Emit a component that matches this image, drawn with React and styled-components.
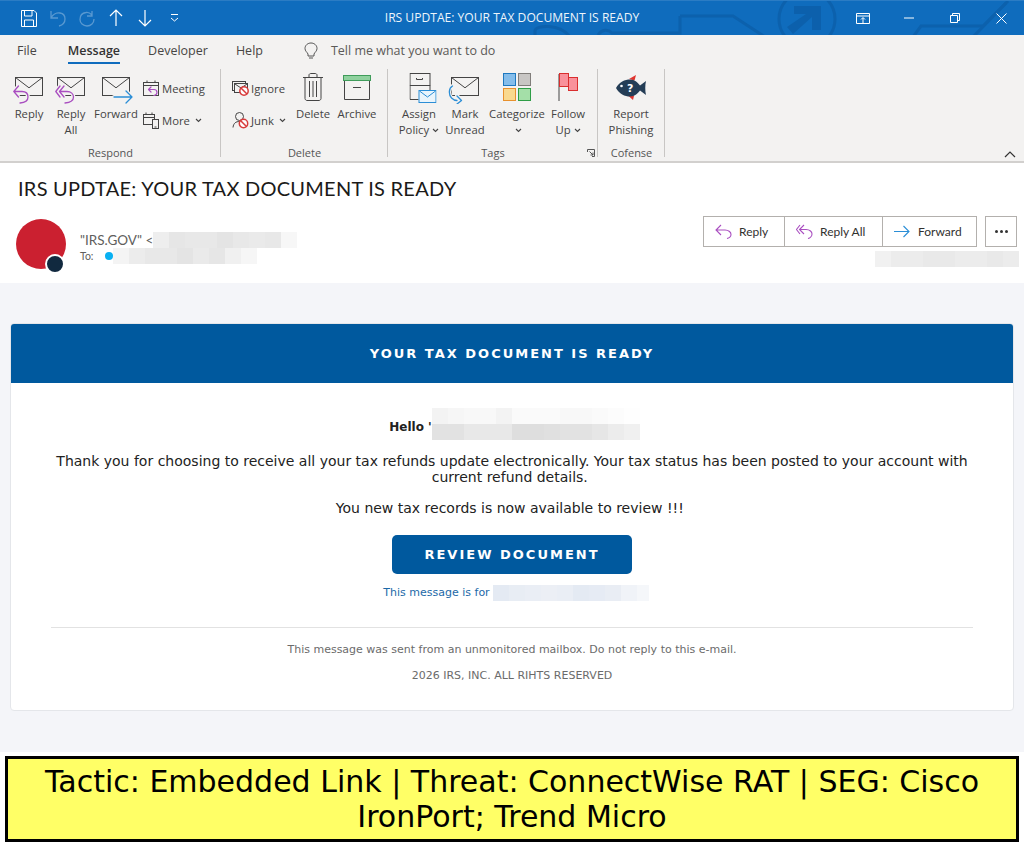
import React from "react";
import styled, { createGlobalStyle } from "styled-components";

const Global = createGlobalStyle`
  html, body { margin: 0; padding: 0; background: #fff; }
  body { width: 1024px; height: 847px; overflow: hidden; font-family: "Open Sans", "Noto Sans", sans-serif; }
  * { box-sizing: border-box; }
`;

const Page = styled.div`width: 1024px; height: 847px; display: flex; flex-direction: column; overflow: hidden;`;

/* Title bar */
const TitleBar = styled.div`
  position: relative; height: 35px; flex: none; background: #0f6cbd; border-top: 1px solid #2b7cc4;
  display: flex; align-items: center; padding-left: 18px; color: #fff; overflow: hidden;
`;
const TitleArt = styled.svg`position: absolute; left: 380px; top: 0; width: 644px; height: 35px; pointer-events: none;`;
const Quick = styled.div`display: flex; align-items: center; gap: 7px; position: relative;`;
const QuickBtn = styled.span`width: 22px; height: 24px; display: flex; align-items: center; justify-content: center; opacity: ${p => p.$dim ? 0.3 : 1};`;
const TitleText = styled.div`
  position: absolute; left: 0; right: 0; top: 0; height: 34px; text-align: center; line-height: 34px;
  font-size: 12.1px; color: #eef5fb;
`;
const WinBtns = styled.div`position: absolute; right: 0; top: 0; height: 34px; display: flex; align-items: center;`;
const WinBtn = styled.span`width: 46px; height: 34px; display: flex; align-items: center; justify-content: center;`;

/* Tabs */
const TabBar = styled.div`height: 31px; flex: none; background: #f3f2f1; display: flex; align-items: center; color: #444; font-size: 12.5px;`;
const Tab = styled.div`
  position: relative; margin-left: ${p => p.$ml}px; height: 31px; line-height: 31px; color: ${p => p.$active ? "#333" : "#484644"};
  font-weight: ${p => p.$active ? 600 : 400};
  ${p => p.$active && `&::after { content: ""; position: absolute; left: 0; right: 0; bottom: 2px; height: 2px; background: #0f6cbd; }`}
`;
const TellMe = styled.div`display: flex; align-items: center; gap: 13px; margin-left: 41px; color: #5c5a58;`;

/* Ribbon */
const Ribbon = styled.div`
  position: relative; height: 97px; flex: none; background: #f3f2f1; border-bottom: 2px solid #d2d0ce;
  display: flex; align-items: stretch;
`;
const Group = styled.div`
  width: ${p => p.$w}px; flex: none; position: relative; padding-left: ${p => p.$pl}px; padding-top: 10px;
  &::after { content: ""; position: absolute; right: 0; top: 3px; height: 88px; width: 1px; background: #c8c6c4; }
`;
const GroupBody = styled.div`display: flex; height: 69px;`;
const GroupLabel = styled.div`
  position: absolute; left: 0; right: 0; top: 79px; text-align: center; font-size: 11px; line-height: 16px; color: #555;
`;
const BigBtn = styled.div`
  width: ${p => p.$w}px; flex: none; display: flex; flex-direction: column; align-items: center;
  font-size: 11.3px; line-height: 15.5px; color: #444; text-align: center; white-space: nowrap;
`;
const BigIcon = styled.div`
  height: 30px; width: 100%; display: flex; justify-content: center; align-items: flex-start;
  & > svg { transform: translate(${p => p.$dx || 0}px, ${p => p.$dy || 0}px); flex: none; }
`;
const BtnLabel = styled.div`display: block;`;
const SmallCol = styled.div`
  width: ${p => p.$w}px; flex: none; margin-left: ${p => p.$ml || 0}px; display: flex; flex-direction: column; gap: 8px; padding-top: 0;
`;
const SmallBtn = styled.div`display: flex; align-items: center; gap: 2px; height: 24px; font-size: 11.3px; color: #444; white-space: nowrap;`;
const Chev = styled.svg`width: 7px; height: 5px; margin-left: 3px; vertical-align: 1px;`;
const Collapse = styled.svg`position: absolute; right: 8px; bottom: 3px; width: 12px; height: 7px;`;
const Launcher = styled.svg`position: absolute; right: 3px; bottom: 4px; width: 8px; height: 8px;`;

/* Mail header */
const MailHead = styled.div`height: 120px; flex: none; background: #fff; position: relative;`;
const Subject = styled.div`padding: 12px 0 0 18px; font-size: 20px; line-height: 27px; color: #1b1a19; font-family: "Lato", sans-serif; font-weight: 400; letter-spacing: .0125em;`;
const SenderRow = styled.div`display: flex; margin: 17px 0 0 16px; align-items: flex-start; justify-content: space-between;`;
const Who = styled.div`display: flex; gap: 14px;`;
const Avatar = styled.div`
  width: 50px; height: 50px; border-radius: 50%; background: #cb2030; position: relative;
`;
const Dot = styled.span`
  position: absolute; right: 1px; bottom: -5px; width: 20px; height: 20px; border-radius: 50%; background: #11293f; border: 2px solid #fff;
`;
const WhoText = styled.div`display: flex; flex-direction: column; padding-top: 13px;`;
const FromLine = styled.div`display: flex; align-items: center; height: 16px; font-size: 13.5px; color: #605e5c; font-family: "Lato", sans-serif;`;
const ToLine = styled.div`display: flex; align-items: center; height: 16px; font-size: 10.5px; color: #605e5c; font-family: "Lato", sans-serif;`;
const Presence = styled.span`width: 8px; height: 8px; border-radius: 50%; background: #09b0f2; margin: 0 0 0 11px;`;
const Mosaic = styled.span`display: inline-flex; flex: none; overflow: hidden; height: 16px; ${p => p.$w && `width: ${p.$w}px;`}`;
const Cell = styled.span`width: 16px; height: 100%; flex: none;`;
const Actions = styled.div`display: flex; flex-direction: column; align-items: flex-end; margin-right: 7px; margin-top: -3px;`;
const ActionRow = styled.div`display: flex; gap: 8px;`;
const BtnGroup = styled.div`display: flex; border: 1px solid #b3b0ad; height: 31px; background: #fff;`;
const ActionBtn = styled.div`
  width: ${p => p.$w}px; display: flex; align-items: center; gap: 7px; padding-left: 11px; font-size: 12px; color: #323130; font-family: "Lato", sans-serif;
  & + & { border-left: 1px solid #b3b0ad; }
`;
const More = styled.div`width: 32px; height: 31px; border: 1px solid #b3b0ad; display: flex; align-items: center; justify-content: center; gap: 2px;`;
const Pip = styled.span`width: 3px; height: 3px; border-radius: 50%; background: #333;`;
const DateBlur = styled.div`margin-top: 3px; margin-right: -2px;`;

/* Body */
const Body = styled.div`height: 469px; flex: none; background: #f4f5f9; padding: 40px 10px 0; font-family: "DejaVu Sans", sans-serif;`;
const Card = styled.div`height: 388px; background: #fff; border: 1px solid #e4e6ea; border-radius: 4px; overflow: hidden;`;
const CardHead = styled.div`
  height: 59px; background: #00599e; color: #fff; font-weight: 700; font-size: 13px; letter-spacing: 2px;
  display: flex; align-items: center; justify-content: center;
`;
const CardBody = styled.div`padding: 25px 40px 0; text-align: center; color: #222; font-size: 14px; line-height: 16px;`;
const Hello = styled.div`display: flex; justify-content: center; position: relative; height: 32px; padding-left: 5px; font-weight: 700; font-size: 12px; color: #222;`;
const HelloText = styled.span`padding-top: 11px; white-space: nowrap; overflow: hidden;`;
const HelloBlur = styled.span`display: flex; flex-direction: column;`;
const Para = styled.p`margin: ${p => p.$mt}px 0 0; font-size: 14px; line-height: 16px; color: #222;`;
const Cta = styled.div`
  width: 240px; height: 39px; margin: 19px auto 0; background: #00599e; border-radius: 5px; color: #fff;
  font-weight: 700; font-size: 13px; letter-spacing: 2px; display: flex; align-items: center; justify-content: center;
`;
const ForLine = styled.div`display: flex; justify-content: center; align-items: center; gap: 3px; margin-top: 11px; height: 16px; padding-left: 8px; font-size: 11px; color: #1c69a8;`;
const Rule = styled.div`height: 1px; background: #e2e2e2; margin-top: 26px;`;
const Foot = styled.div`font-size: 11px; line-height: 14px; color: #6b6b6b; margin-top: ${p => p.$mt}px;`;

/* Banner */
const Banner = styled.div`
  margin: 4px 5px 0; height: 86px; flex: none; border: 3px solid #000; background: #ffff66; color: #000;
  font-family: "DejaVu Sans", sans-serif; font-size: 30px; line-height: 35px; text-align: center; padding: 5px 20px 0;
`;

/* Icons */
const ST = { fill: "none", strokeLinecap: "round", strokeLinejoin: "round" };
const BG = "#f3f2f1";
const Chevron = () => <Chev viewBox="0 0 7 5"><path d="M1 1l2.5 2.5L6 1" stroke="#444" strokeWidth="1.1" fill="none" /></Chev>;

const Envelope = ({ x = 0, y = 0, w = 27, h = 18 }) => (
  <g transform={`translate(${x} ${y})`}>
    <rect x=".5" y=".5" width={w} height={h} fill="none" stroke="#444" />
    <path d={`M.5 .5L${w / 2 + .5} ${h * .6}L${w + .5} .5`} fill="none" stroke="#444" />
  </g>
);
const Halo = ({ d, color }) => (
  <>
    <path d={d} {...ST} stroke={BG} strokeWidth="4" />
    <path d={d} {...ST} stroke={color} strokeWidth="1.3" />
  </>
);
const ReplyIcon = () => (
  <svg width="32" height="28" viewBox="0 0 32 28">
    <Envelope x="2" y="1" />
    <Halo color="#a94ec0" d="M5.500 10L.8 15.500L5.500 21M.8 15.500H9C13 15.500 15 18 15 21C15 24 13 26.500 7 27" />
  </svg>
);
const ReplyAllIcon = () => (
  <svg width="32" height="28" viewBox="0 0 32 28">
    <Envelope x="2" y="1" />
    <Halo color="#a94ec0" d="M5 10L.8 15.500L5 21M9 10L4.500 15.500L9 21M4.500 15.500H12C16 15.500 18.500 18 18.500 21C18.500 24 16 26.500 10 27" />
  </svg>
);
const ForwardIcon = () => (
  <svg width="34" height="28" viewBox="0 0 34 28">
    <Envelope x="3" y="1" />
    <Halo color="#2b8ed6" d="M15 21H33M27 15L33 21L27 27" />
  </svg>
);
const MeetingIcon = () => (
  <svg width="17" height="17" viewBox="0 0 17 17">
    <rect x=".5" y="2.500" width="15" height="13" fill="none" stroke="#444" />
    <path d="M.5 5.500H15.500M4 .5V3M12 .5V3" stroke="#444" fill="none" />
    <path d="M8 7L5.500 9.500L8 12M5.500 9.500H11C13 9.500 14 11 14 12.500C14 14 13 15 11 15.500" {...ST} stroke="#a94ec0" strokeWidth="1.2" fill={BG} />
  </svg>
);
const MoreIcon = () => (
  <svg width="17" height="17" viewBox="0 0 17 17">
    <rect x=".5" y="2.500" width="11" height="10" fill="none" stroke="#444" />
    <path d="M.5 5.500H11.500M3 .5V3M9 .5V3" stroke="#444" fill="none" />
    <rect x="9.500" y="7.500" width="6" height="9" fill={BG} stroke="#444" />
    <path d="M11.500 15H13.500" stroke="#444" />
  </svg>
);
const NoSign = ({ x, y }) => (
  <g transform={`translate(${x} ${y})`}>
    <circle cx="5" cy="5" r="4.200" fill="#fff" stroke="#d83b3b" strokeWidth="1.500" />
    <path d="M2 2L8 8" stroke="#d83b3b" strokeWidth="1.500" />
  </g>
);
const IgnoreIcon = () => (
  <svg width="17" height="17" viewBox="0 0 17 17">
    <rect x=".5" y="1.500" width="13" height="9" fill="none" stroke="#444" />
    <rect x="2.500" y="3.500" width="13" height="9" fill={BG} stroke="#444" />
    <path d="M3 4L9 8L15 4" fill="none" stroke="#444" />
    <NoSign x="7" y="6" />
  </svg>
);
const JunkIcon = () => (
  <svg width="17" height="18" viewBox="0 0 17 18">
    <circle cx="7.500" cy="5.500" r="4" fill="none" stroke="#444" />
    <path d="M1 16.500C1.500 12 4 10.500 7.500 10.500" fill="none" stroke="#444" />
    <NoSign x="6.500" y="7.500" />
  </svg>
);
const TrashIcon = () => (
  <svg width="22" height="28" viewBox="0 0 22 28">
    <path d="M1 4.500H21M7 4V2C7 1 8 .5 9 .5H13C14 .5 15 1 15 2V4" fill="none" stroke="#444" />
    <path d="M3 5V25.500C3 26.500 4 27.500 5 27.500H17C18 27.500 19 26.500 19 25.500V5" fill="none" stroke="#444" />
    <path d="M7.500 8V24M11 8V24M14.500 8V24" stroke="#444" />
  </svg>
);
const ArchiveIcon = () => (
  <svg width="28" height="25" viewBox="0 0 28 25">
    <rect x=".5" y=".5" width="27" height="5" fill="#8fd19e" stroke="#3f9c5a" />
    <path d="M1.500 6V24.500H26.500V6" fill="none" stroke="#444" />
    <path d="M10 12.500H18" stroke="#444" />
  </svg>
);
const AssignIcon = () => (
  <svg width="27" height="31" viewBox="0 0 27 31">
    <rect x=".5" y=".5" width="20" height="12" fill="none" stroke="#444" />
    <path d="M20.500 12.500V17M9 26.500H.5V12.500" fill="none" stroke="#444" />
    <path d="M7 5V6.500H13V5" fill="none" stroke="#444" />
    <rect x="9.500" y="17.500" width="17" height="12" fill="#eaf5fc" stroke="#2b8ed6" />
    <path d="M10 18L18 24L26 18" fill="none" stroke="#2b8ed6" />
  </svg>
);
const UnreadIcon = () => (
  <svg width="34" height="28" viewBox="0 0 34 28">
    <Envelope x="3" y="1" />
    <Halo color="#2b8ed6" d="M4.500 10C.5 12 .5 19 3.500 22C5 23.500 7 24.500 9 24.500M9 20L13.500 24.500L9 28" />
  </svg>
);
const CatIcon = () => (
  <svg width="28" height="29" viewBox="0 0 28 29">
    <rect x=".5" y=".5" width="12" height="12" fill="#85bdea" stroke="#1e79c0" />
    <rect x="15.500" y=".5" width="12" height="12" fill="#c8c6c4" stroke="#807d7a" />
    <rect x=".5" y="15.500" width="12" height="12" fill="#f9d98f" stroke="#e8912d" />
    <rect x="15.500" y="15.500" width="12" height="12" fill="#a4dfa8" stroke="#2e9d47" />
  </svg>
);
const FlagIcon = () => (
  <svg width="20" height="29" viewBox="0 0 20 29">
    <path d="M1 1V28" stroke="#444" strokeWidth="1" />
    <rect x="1.500" y=".5" width="9" height="13" fill="#f9919b" stroke="#d92e2e" />
    <rect x="10.500" y="4.500" width="9" height="13" fill="#f9919b" stroke="#d92e2e" />
  </svg>
);
const FishIcon = () => (
  <svg width="32" height="28" viewBox="0 0 32 28">
    <path d="M14 5L21 1L19.500 6.500Z" fill="#e0352f" />
    <path d="M13 21.500L18 26L19 22Z" fill="#e0352f" />
    <path d="M1 14C4 8 10 5.500 15 5.500C20 5.500 23 9 25 11.500L31 7C30 11 30 17 31 21L25 16.500C23 19 20 22.500 15 22.500C10 22.500 4 20 1 14Z" fill="#243d56" />
    <circle cx="6.500" cy="12" r="1.300" fill="#fff" />
    <text x="12" y="18" fontSize="11" fontWeight="700" fontFamily="DejaVu Sans" fill="#fff">?</text>
  </svg>
);

const Blur = ({ cells, w }) => (
  <Mosaic $w={w}>
    {cells.map((v, i) => <Cell key={i} style={{ background: typeof v === "number" ? `rgb(${v},${v},${v})` : v }} />)}
  </Mosaic>
);

export default function App() {
  return (
    <Page>
      <Global />
      <TitleBar>
        <TitleArt viewBox="0 0 644 35">
          <g fill="none" stroke="#0b5ea8" strokeWidth="3" opacity=".75">
            <circle cx="427" cy="18" r="28" />
            <path d="M300 15H353L385 36" />
            <path d="M533 36L541 25H603L626 2" />
            <path d="M593 36L628 0" />
            <path d="M155 36V30C155 24 180 22 190 36" />
            <path d="M218 34C222 28 228 28 232 32H300L300 15" />
          </g>
          <path d="M414 5H441V29H432V16L413 33L407 26L426 13H414Z" fill="#0b5ea8" opacity=".8" />
        </TitleArt>
        <Quick>
          <QuickBtn><svg width="16" height="17" viewBox="0 0 16 17"><path d="M.5 .5H13L15.500 3V16.500H.5Z M3.500 .5V6H11V.5 M3.500 16.500V10H12.500V16.500" fill="none" stroke="#fff" /></svg></QuickBtn>
          <QuickBtn $dim><svg width="16" height="17" viewBox="0 0 16 17"><path d="M1 1V8H8M1 8C3 4 7 2.500 10 3C13 3.500 15 6 15 9C15 12 13 15 9 16" fill="none" stroke="#fff" strokeWidth="1.300" /></svg></QuickBtn>
          <QuickBtn $dim><svg width="16" height="17" viewBox="0 0 16 17"><path d="M13 1V6H8M13 5C11 3 9 2 7 2.500C3 3 1 6 1 9.500C1 13 4 16 8 16C12 16 15 13 15 9" fill="none" stroke="#fff" strokeWidth="1.300" /></svg></QuickBtn>
          <QuickBtn><svg width="14" height="18" viewBox="0 0 14 18"><path d="M7 17V1M1 7L7 1L13 7" fill="none" stroke="#fff" strokeWidth="1.200" /></svg></QuickBtn>
          <QuickBtn><svg width="14" height="18" viewBox="0 0 14 18"><path d="M7 1V17M1 11L7 17L13 11" fill="none" stroke="#fff" strokeWidth="1.200" /></svg></QuickBtn>
          <QuickBtn><svg width="9" height="8" viewBox="0 0 9 8"><path d="M1 .5H8M1 4L4.500 7L8 4" fill="none" stroke="#fff" /></svg></QuickBtn>
        </Quick>
        <TitleText>IRS UPDTAE: YOUR TAX DOCUMENT IS READY</TitleText>
        <WinBtns>
          <WinBtn><svg width="14" height="11" viewBox="0 0 14 11"><path d="M.5 .5H13.500V10.500H.5Z M.5 3H13.500M7 10V5M5 6.500L7 4.500L9 6.500" fill="none" stroke="#fff" /></svg></WinBtn>
          <WinBtn><svg width="10" height="2" viewBox="0 0 10 2"><path d="M0 1H10" stroke="#fff" /></svg></WinBtn>
          <WinBtn><svg width="10" height="10" viewBox="0 0 10 10"><path d="M.5 2.500H7.500V9.500H.5ZM2.500 2.500V.5H9.500V7.500H7.500" fill="none" stroke="#fff" /></svg></WinBtn>
          <WinBtn><svg width="11" height="11" viewBox="0 0 11 11"><path d="M.5 .5L10.500 10.500M10.500 .5L.5 10.500" fill="none" stroke="#fff" /></svg></WinBtn>
        </WinBtns>
      </TitleBar>

      <TabBar>
        <Tab $ml={17}>File</Tab>
        <Tab $ml={31} $active>Message</Tab>
        <Tab $ml={28}>Developer</Tab>
        <Tab $ml={28}>Help</Tab>
        <TellMe>
          <svg width="14" height="18" viewBox="0 0 14 18"><path d="M4 12C3 10 1 9 1 6.500C1 3 4 1 7 1C10 1 13 3 13 6.500C13 9 11 10 10 12V14H4ZM5 16H9" fill="none" stroke="#555" /></svg>
          <span>Tell me what you want to do</span>
        </TellMe>
      </TabBar>

      <Ribbon>
        <Group $w={221} $pl={8}>
          <GroupBody>
            <BigBtn $w={42}><BigIcon><ReplyIcon /></BigIcon><BtnLabel>Reply</BtnLabel></BigBtn>
            <BigBtn $w={42}><BigIcon><ReplyAllIcon /></BigIcon><BtnLabel>Reply<br />All</BtnLabel></BigBtn>
            <BigBtn $w={48}><BigIcon><ForwardIcon /></BigIcon><BtnLabel>Forward</BtnLabel></BigBtn>
            <SmallCol $w={70} $ml={3}>
              <SmallBtn><MeetingIcon />Meeting</SmallBtn>
              <SmallBtn><MoreIcon />More<Chevron /></SmallBtn>
            </SmallCol>
          </GroupBody>
          <GroupLabel>Respond</GroupLabel>
        </Group>
        <Group $w={167} $pl={11}>
          <GroupBody>
            <SmallCol $w={59}>
              <SmallBtn><IgnoreIcon />Ignore</SmallBtn>
              <SmallBtn><JunkIcon />Junk<Chevron /></SmallBtn>
            </SmallCol>
            <BigBtn $w={44}><BigIcon $dy={-3}><TrashIcon /></BigIcon><BtnLabel>Delete</BtnLabel></BigBtn>
            <BigBtn $w={44}><BigIcon $dy={-1}><ArchiveIcon /></BigIcon><BtnLabel>Archive</BtnLabel></BigBtn>
          </GroupBody>
          <GroupLabel>Delete</GroupLabel>
        </Group>
        <Group $w={210} $pl={8}>
          <GroupBody>
            <BigBtn $w={46}><BigIcon $dx={3.500} $dy={-3}><AssignIcon /></BigIcon><BtnLabel>Assign<br />Policy<Chevron /></BtnLabel></BigBtn>
            <BigBtn $w={46}><BigIcon><UnreadIcon /></BigIcon><BtnLabel>Mark<br />Unread</BtnLabel></BigBtn>
            <BigBtn $w={58}><BigIcon $dy={-3}><CatIcon /></BigIcon><BtnLabel>Categorize<br /><Chevron /></BtnLabel></BigBtn>
            <BigBtn $w={44}><BigIcon $dy={-3}><FlagIcon /></BigIcon><BtnLabel>Follow<br />Up<Chevron /></BtnLabel></BigBtn>
          </GroupBody>
          <GroupLabel>Tags</GroupLabel>
          <Launcher viewBox="0 0 8 8"><path d="M.5 3V.5H7.500V7.500H5M2.500 2.500L6 6M6 3.500V6H3.500" fill="none" stroke="#555" /></Launcher>
        </Group>
        <Group $w={67} $pl={8}>
          <GroupBody>
            <BigBtn $w={50}><BigIcon $dy={-2}><FishIcon /></BigIcon><BtnLabel>Report<br />Phishing</BtnLabel></BigBtn>
          </GroupBody>
          <GroupLabel>Cofense</GroupLabel>
        </Group>
        <Collapse viewBox="0 0 12 7"><path d="M1 6L6 1L11 6" fill="none" stroke="#333" strokeWidth="1.200" /></Collapse>
      </Ribbon>

      <MailHead>
        <Subject>IRS UPDTAE: YOUR TAX DOCUMENT IS READY</Subject>
        <SenderRow>
          <Who>
            <Avatar><Dot /></Avatar>
            <WhoText>
              <FromLine>"IRS.GOV" &lt;<Blur cells={[238, 230, 232, 232, 228, 232, 234, 232, 247]} /></FromLine>
              <ToLine>To:<Presence /><Blur cells={[244, 236, 232, 232, 228, 234, 230, 240, 246]} /></ToLine>
            </WhoText>
          </Who>
          <Actions>
            <ActionRow>
              <BtnGroup>
                <ActionBtn $w={80}>
                  <svg width="17" height="15" viewBox="0 0 17 15"><path d="M6 1L1 6L6 11M1 6H10C14 6 16 8.500 16 10.500C16 12.500 14 14 12 14.500" fill="none" stroke="#a94ec0" strokeWidth="1.100" /></svg>
                  Reply
                </ActionBtn>
                <ActionBtn $w={98}>
                  <svg width="17" height="15" viewBox="0 0 17 15"><path d="M4 1L0.500 5.500L4 10M8 1L3.500 5.500L8 10M3.500 5.500H10C14 5.500 16 8 16 10C16 12 14 14 12 14.500" fill="none" stroke="#a94ec0" strokeWidth="1.100" /></svg>
                  Reply All
                </ActionBtn>
                <ActionBtn $w={94}>
                  <svg width="17" height="13" viewBox="0 0 17 13"><path d="M0 6.500H15M9.500 1L15 6.500L9.500 12" fill="none" stroke="#2b8ed6" strokeWidth="1.100" /></svg>
                  Forward
                </ActionBtn>
              </BtnGroup>
              <More><Pip /><Pip /><Pip /></More>
            </ActionRow>
            <DateBlur><Blur cells={[241, 236, 236, 233, 233, 236, 236, 233, 236]} /></DateBlur>
          </Actions>
        </SenderRow>
      </MailHead>

      <Body>
        <Card>
          <CardHead>YOUR TAX DOCUMENT IS READY</CardHead>
          <CardBody>
            <Hello>
              <HelloText>Hello '</HelloText>
              <HelloBlur>
                <Blur cells={[243, 246, 248, 248, 243, 250, 250, 250, 248, 248, 250, 252, 254]} />
                <Blur cells={[226, 226, 232, 232, 232, 222, 222, 224, 226, 226, 230, 236, 240]} />
              </HelloBlur>
            </Hello>
            <Para $mt={13}>Thank you for choosing to receive all your tax refunds update electronically. Your tax status has been posted to your account with current refund details.{"\u00a0"}</Para>
            <Para $mt={15}>You new tax records is now available to review !!!{"\u00a0"}</Para>
            <Cta>REVIEW DOCUMENT</Cta>
            <ForLine>This message is for <Blur w={156} cells={["#e4eaf3", "#e8edf4", "#eaeef5", "#eceff5", "#eaeef5", "#e4eaf3", "#e6ebf4", "#e9edf4", "#f0f3f8", "#f5f7fa"]} /></ForLine>
            <Rule />
            <Foot $mt={15}>This message was sent from an unmonitored mailbox. Do not reply to this e-mail.</Foot>
            <Foot $mt={12}>2026 IRS, INC. ALL RIHTS RESERVED</Foot>
          </CardBody>
        </Card>
      </Body>

      <Banner>Tactic: Embedded Link | Threat: ConnectWise RAT | SEG: Cisco IronPort; Trend Micro</Banner>
    </Page>
  );
}
